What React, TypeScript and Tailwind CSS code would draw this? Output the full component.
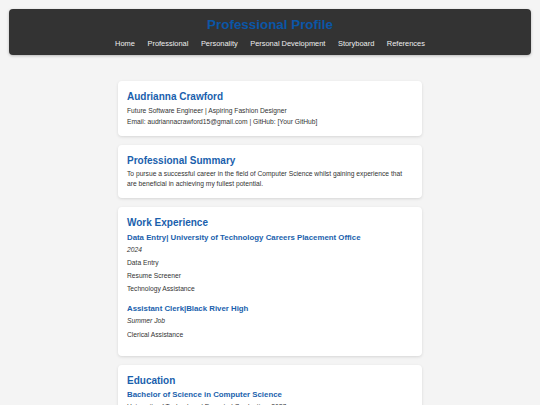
import React from 'react';

const navItems = ['Home', 'Professional', 'Personality', 'Personal Development', 'Storyboard', 'References'];

const Card: React.FC<{ className?: string; children: React.ReactNode }> = ({ className = '', children }) => (
  <section className={`bg-white rounded-[4px] shadow-[0_1px_3px_rgba(0,0,0,0.12)] px-[9px] pt-[10px] ${className}`}>
    {children}
  </section>
);

const Heading: React.FC<{ children: React.ReactNode }> = ({ children }) => (
  <h2 className="text-[10px] font-bold text-[#1a5fad] leading-[12px]">{children}</h2>
);

export default function App() {
  return (
    <div className="min-h-screen bg-[#f4f4f4] font-['Liberation_Sans',Arial,sans-serif] text-[#333] px-[9px] pt-[9px] pb-[20px]">
      {/* Header */}
      <header className="bg-[#333] rounded-[4px] h-[46px] flex flex-col items-center shadow-[0_1px_3px_rgba(0,0,0,0.25)]">
        <h1 className="text-[13.4px] font-bold text-[#0b56a6] leading-[16px] mt-[8px]">Professional Profile</h1>
        <nav className="flex gap-[12.5px] mt-[5.5px]">
          {navItems.map((item) => (
            <a key={item} className="text-[7.45px] leading-[9px] text-[#eee]">{item}</a>
          ))}
        </nav>
      </header>

      <main className="w-[304px] mx-auto mt-[26px] flex flex-col gap-[9px]">
        {/* Intro */}
        <Card className="pb-[8.5px]">
          <Heading>Audrianna Crawford</Heading>
          <p className="text-[6.7px] leading-[11px] mt-[2px]">Future Software Engineer | Aspiring Fashion Designer</p>
          <p className="text-[6.7px] leading-[11px]">Email: audriannacrawford15@gmail.com | GitHub: [Your GitHub]</p>
        </Card>

        {/* Summary */}
        <Card className="pb-[8px]">
          <Heading>Professional Summary</Heading>
          <p className="text-[6.7px] leading-[10.3px] mt-[2.5px]">
            To pursue a successful career in the field of Computer Science whilst gaining experience that are beneficial in achieving my fullest potential.
          </p>
        </Card>

        {/* Work */}
        <Card className="pb-[16px]">
          <Heading>Work Experience</Heading>
          <h3 className="text-[7.84px] font-bold text-[#1a5fad] leading-[10px] mt-[4.7px]">Data Entry| University of Technology Careers Placement Office</h3>
          <p className="text-[6.7px] leading-[10px] mt-[1.6px] italic">2024</p>
          <p className="text-[6.7px] leading-[10px] mt-[3px]">Data Entry</p>
          <p className="text-[6.7px] leading-[10px] mt-[3px]">Resume Screener</p>
          <p className="text-[6.7px] leading-[10px] mt-[3px]">Technology Assistance</p>

          <h3 className="text-[7.84px] font-bold text-[#1a5fad] leading-[10px] mt-[9.7px]">Assistant Clerk|Black River High</h3>
          <p className="text-[6.7px] leading-[10px] mt-[2.7px] italic">Summer Job</p>
          <p className="text-[6.7px] leading-[10px] mt-[3.3px]">Clerical Assistance</p>
        </Card>

        {/* Education */}
        <Card className="pb-[17px]">
          <Heading>Education</Heading>
          <h3 className="text-[7.84px] font-bold text-[#1a5fad] leading-[10px] mt-[3.6px]">Bachelor of Science in Computer Science</h3>
          <p className="text-[6.7px] leading-[10px] mt-[1.6px]">University of Technology | Expected Graduation: 2027</p>
          <p className="text-[6.7px] leading-[10px] mt-[3px]">Relevant coursework: Programming, Data Structures, Web Development</p>
        </Card>
      </main>
    </div>
  );
}
